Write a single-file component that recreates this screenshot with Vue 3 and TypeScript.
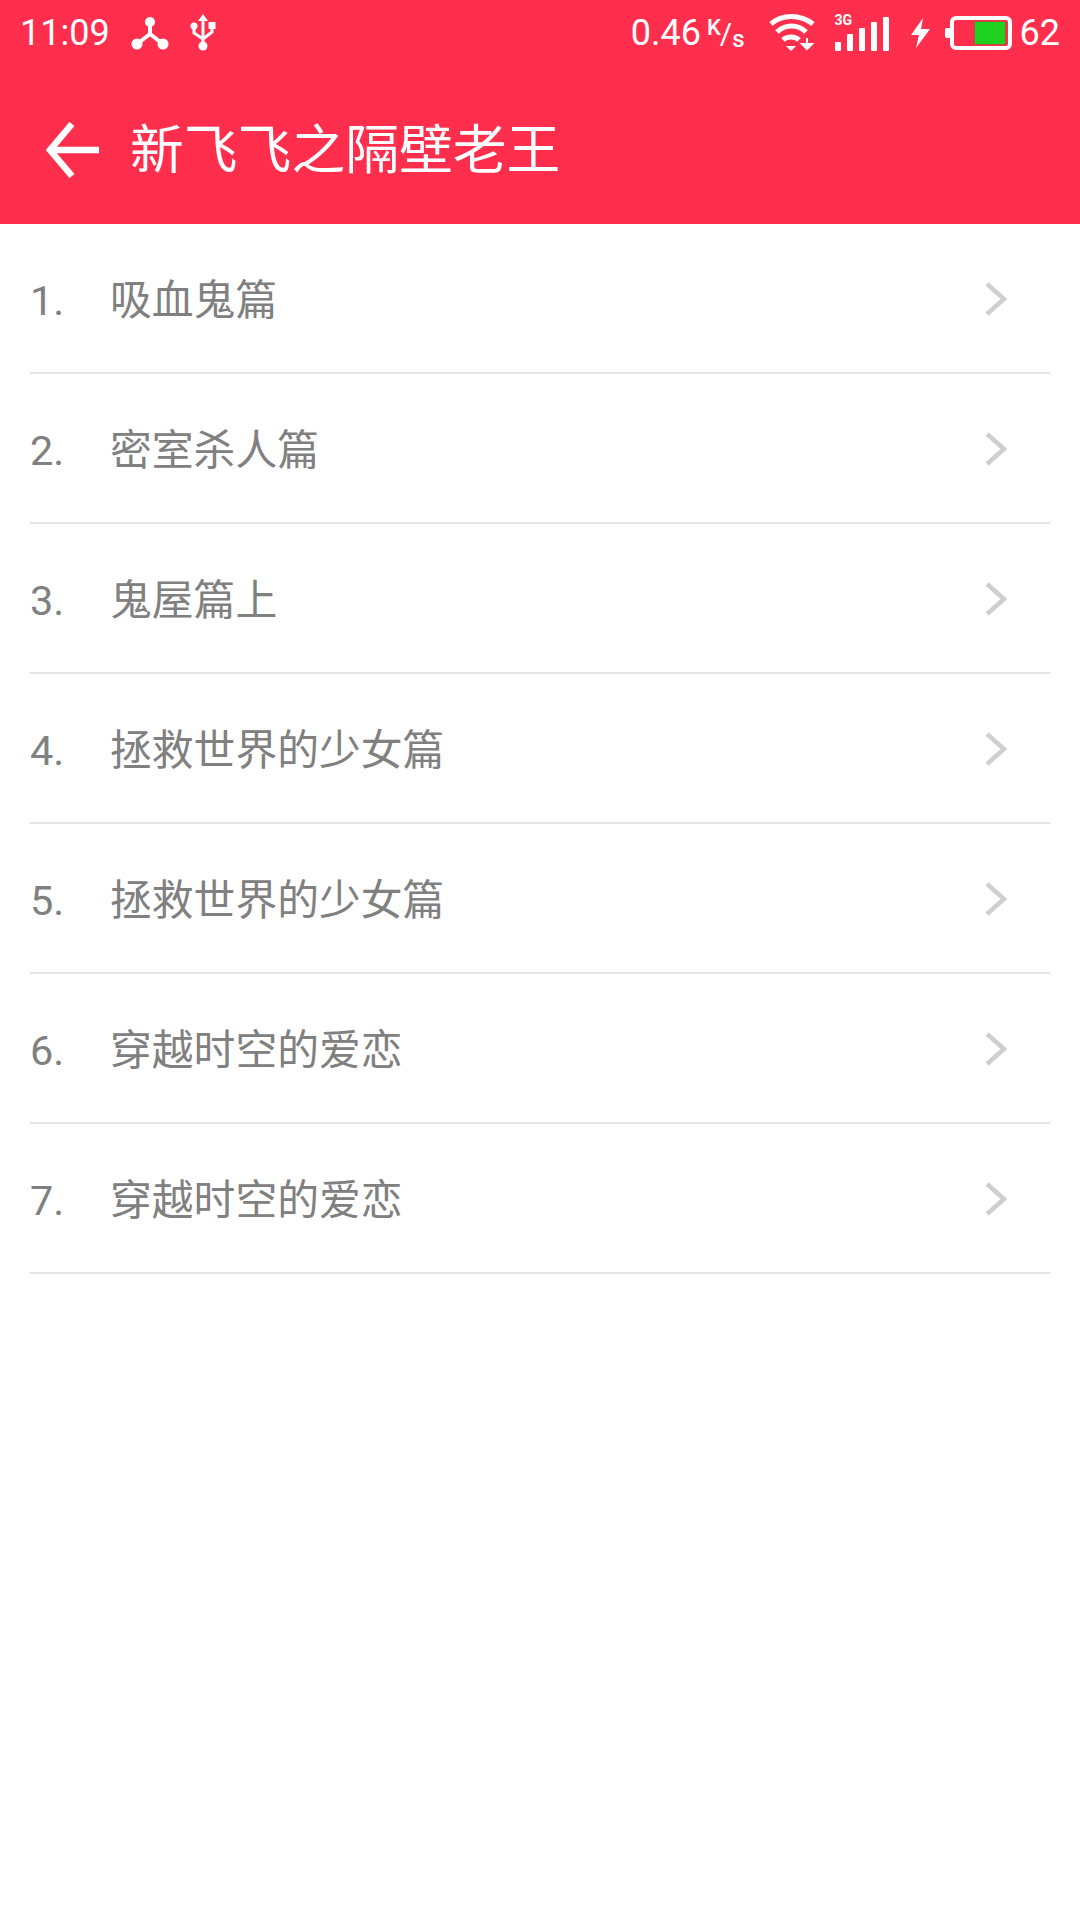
<script setup lang="ts">
const chapters = [
  '吸血鬼篇',
  '密室杀人篇',
  '鬼屋篇上',
  '拯救世界的少女篇',
  '拯救世界的少女篇',
  '穿越时空的爱恋',
  '穿越时空的爱恋',
]
</script>

<template>
  <div class="page">
    <div class="head">
      <div class="status">
        <div class="statusLeft">
          <span class="time">11:09</span>
          <svg class="hotspot" width="38" height="36" viewBox="0 0 38 36">
            <path d="M19 8V19M19 19L6 29M19 19L32 29" stroke="#fff" stroke-width="4" fill="none" />
            <circle cx="19" cy="7" r="5" fill="#fff" />
            <circle cx="6" cy="29" r="5.5" fill="#fff" />
            <circle cx="32" cy="29" r="5.5" fill="#fff" />
          </svg>
          <svg class="usb" width="26" height="38" viewBox="0 0 26 38">
            <path d="M13 0L18 7H8Z" fill="#fff" />
            <path d="M13 6V32M4 13V19L13 25M22 12V18L13 25" stroke="#fff" stroke-width="3" fill="none" />
            <circle cx="4" cy="12" r="3.5" fill="#fff" />
            <rect x="18.5" y="8" width="7" height="7" fill="#fff" />
            <circle cx="13" cy="32" r="4.5" fill="#fff" />
          </svg>
        </div>
        <div class="statusRight">
          <span class="speed">0.46</span>
          <span class="rate"><i>K</i><em>/</em><b>s</b></span>
          <svg class="wifi" width="46" height="38" viewBox="0 0 46 38">
            <path d="M2 10C13 0 31 0 44 10" stroke="#fff" stroke-width="5" fill="none" />
            <path d="M8 18C16 10 29 10 37 18" stroke="#fff" stroke-width="5" fill="none" />
            <path d="M14 26C18 22 26 22 30 26" stroke="#fff" stroke-width="5" fill="none" />
            <path d="M17 32H27L22 37Z" fill="#fff" />
            <path d="M38 24V30M33 30H43L38 35Z" stroke="#fff" stroke-width="2" fill="#fff" />
          </svg>
          <div class="signal">
            <span class="net">3G</span>
            <span class="bar" style="height: 9px"></span>
            <span class="bar" style="height: 17px"></span>
            <span class="bar" style="height: 23px"></span>
            <span class="bar" style="height: 29px"></span>
            <span class="bar" style="height: 34px"></span>
          </div>
          <svg class="bolt" width="20" height="30" viewBox="0 0 20 30">
            <path d="M12 0L0 17H8L5 30L19 11H10Z" fill="#fff" />
          </svg>
          <div class="battery">
            <span class="tip"></span>
            <div class="shell"><span class="level"></span></div>
          </div>
          <span class="percent">62</span>
        </div>
      </div>
      <div class="titleBar">
        <svg class="back" width="56" height="56" viewBox="0 0 56 56">
          <path d="M27 2L5 28L27 54M5 28H54" stroke="#fff" stroke-width="6.5" fill="none" />
        </svg>
        <span class="title">新飞飞之隔壁老王</span>
      </div>
    </div>
    <ul class="list">
      <li v-for="(name, i) in chapters" :key="i" class="row">
        <span class="num">{{ i + 1 }}.</span>
        <span class="name">{{ name }}</span>
        <svg class="chev" width="24" height="34" viewBox="0 0 24 34">
          <path d="M3 2L20 17L3 32" stroke="#cfcfcf" stroke-width="4.5" fill="none" />
        </svg>
      </li>
    </ul>
  </div>
</template>

<style scoped>
.page {
  width: 1080px;
  height: 1920px;
  background: #fff;
  overflow: hidden;
  font-family: Roboto, "Noto Sans CJK SC", sans-serif;
}

.head {
  height: 224px;
  background: #ff2e4d;
  color: #fff;
}

.status {
  height: 66px;
  display: flex;
  justify-content: space-between;
  align-items: center;
  padding: 0 20px;
}

.statusLeft,
.statusRight {
  display: flex;
  align-items: center;
}

.time {
  font-size: 36px;
  line-height: 66px;
}

.hotspot {
  margin-left: 21px;
}

.usb {
  margin-left: 21px;
}

.speed {
  font-size: 36px;
}

.rate {
  margin-left: 6px;
  white-space: nowrap;
  line-height: 40px;
}

.rate i {
  font-style: normal;
  font-weight: 500;
  font-size: 22px;
  vertical-align: 9px;
}

.rate em {
  font-style: normal;
  font-size: 30px;
  margin-left: -1px;
}

.rate b {
  font-weight: 500;
  font-size: 24px;
  vertical-align: -3px;
}

.wifi {
  margin-left: 24px;
}

.signal {
  position: relative;
  display: flex;
  align-items: flex-end;
  gap: 6px;
  margin-left: 20px;
  height: 36px;
}

.net {
  position: absolute;
  left: 0;
  top: -3px;
  font-size: 14px;
  font-weight: 700;
}

.bar {
  width: 6px;
  background: #fff;
  border-radius: 1px;
}

.bolt {
  margin-left: 22px;
}

.battery {
  display: flex;
  align-items: center;
  margin-left: 14px;
}

.tip {
  width: 5px;
  height: 10px;
  background: #fff;
  border-radius: 2px 0 0 2px;
}

.shell {
  box-sizing: border-box;
  width: 62px;
  height: 34px;
  border: 4px solid #fff;
  border-radius: 6px;
  display: flex;
  justify-content: flex-end;
  align-items: center;
  padding: 0 3px;
}

.level {
  width: 30px;
  height: 22px;
  background: #1fd11f;
  outline: 1px solid #b5503c;
}

.percent {
  font-size: 36px;
  margin-left: 8px;
}

.titleBar {
  height: 158px;
  display: flex;
  align-items: center;
  padding-left: 45px;
  box-sizing: border-box;
}

.back {
  margin-top: 10px;
}

.title {
  font-size: 53.8px;
  margin-left: 29px;
  white-space: nowrap;
}

.list {
  list-style: none;
  margin: 0;
  padding: 0 30px;
}

.row {
  height: 150px;
  box-sizing: border-box;
  border-bottom: 2px solid #e3e3e3;
  display: flex;
  align-items: center;
  color: #808080;
}

.num {
  width: 80px;
  font-size: 41.5px;
  padding-top: 4px;
}

.name {
  flex: 1;
  font-size: 41.8px;
  padding-bottom: 3px;
  white-space: nowrap;
}

.chev {
  margin-top: 2px;
  margin-right: 42px;
}
</style>

<style>
body {
  margin: 0;
}
</style>
